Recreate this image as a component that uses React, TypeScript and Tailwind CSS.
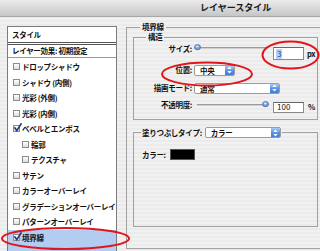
import React from "react";

const FONT = "font-['Noto_Sans_CJK_JP','Noto_Sans_CJK_SC',sans-serif]";
const T = "text-[7.5px] leading-[10px] tracking-[-0.3px] font-semibold";

function Check({ checked }: { checked?: boolean }) {
  return (
    <span className="relative block w-[7px] h-[7px] shrink-0 border border-[#8c8c8c] bg-gradient-to-b from-white to-[#dcdcdc]">
      {checked && (
        <svg className="absolute left-[0px] top-[-3px]" width="8" height="9" viewBox="0 0 8 9">
          <path d="M0.8 4.8 L2.8 7.6 L7.2 0.8" stroke="#1d3a7a" strokeWidth="1.6" fill="none" strokeLinecap="round" />
        </svg>
      )}
    </span>
  );
}

function Arrows() {
  return (
    <svg width="5" height="8" viewBox="0 0 5 8">
      <path d="M2.5 0.5 L4.7 3 L0.3 3 Z" fill="#fff" />
      <path d="M2.5 7.5 L4.7 5 L0.3 5 Z" fill="#fff" />
    </svg>
  );
}

function Select({ text, wide }: { text: string; wide: "w-[41px]" | "w-[86px]" | "w-[76px]" }) {
  return (
    <div className={`flex h-[11px] ${wide} border border-[#9c9c9c] rounded-[2px] bg-white overflow-hidden shrink-0`}>
      <span className={`flex-1 pl-[5px] ${T} leading-[9px] text-[#111]`}>{text}</span>
      <span className="w-[9px] flex items-center justify-center bg-gradient-to-b from-[#a9c9f3] via-[#5d93e0] to-[#3f7bd8]">
        <Arrows />
      </span>
    </div>
  );
}

function Slider({ right }: { right?: boolean }) {
  return (
    <div className="relative w-[74px] h-[8px] shrink-0 flex items-center">
      <div className="ml-[3px] w-[70px] h-[2px] bg-[#9a9a9a] border-b border-[#d0d0d0]" />
      <svg
        className={right ? "absolute left-[68px] top-[0px]" : "absolute left-[0px] top-[0px]"}
        width="7"
        height="7"
        viewBox="0 0 7 7"
      >
        <ellipse cx="3.5" cy="3.2" rx="3" ry="2.6" fill="#6f9ee0" stroke="#4a6fa8" strokeWidth="0.8" />
        <ellipse cx="3.2" cy="2.4" rx="1.6" ry="1" fill="#d8e6f8" />
      </svg>
    </div>
  );
}

const items: { t: string; c?: boolean; sub?: boolean; sel?: boolean; h: string }[] = [
  { t: "ドロップシャドウ", h: "h-[16px]" },
  { t: "シャドウ (内側)", h: "h-[15px]" },
  { t: "光彩 (外側)", h: "h-[16px]" },
  { t: "光彩 (内側)", h: "h-[15px]" },
  { t: "ベベルとエンボス", c: true, h: "h-[16px]" },
  { t: "輪郭", sub: true, h: "h-[15px]" },
  { t: "テクスチャ", sub: true, h: "h-[16px]" },
  { t: "サテン", h: "h-[15px]" },
  { t: "カラーオーバーレイ", h: "h-[16px]" },
  { t: "グラデーションオーバーレイ", h: "h-[15px]" },
  { t: "パターンオーバーレイ", h: "h-[16px]" },
  { t: "境界線", c: true, sel: true, h: "h-[24px]" },
];

export default function App() {
  return (
    <div className={`relative w-[320px] h-[251px] overflow-hidden text-[#111] ${FONT} bg-[repeating-linear-gradient(180deg,#ebebeb_0px,#ebebeb_2px,#f1f1f1_2px,#f1f1f1_4px)]`}>
      {/* title bar */}
      <div className="h-[17px] flex items-center pl-[200px] bg-gradient-to-b from-[#ececec] to-[#c6c6c6] border-b border-[#a8a8a8]">
        <span className="text-[9px] leading-[12px] font-semibold text-[#1a1a1a]">レイヤースタイル</span>
      </div>

      <div className="flex">
        {/* left styles list */}
        <div className="ml-[7px] mt-[9px] w-[110px] h-[240px] shrink-0 border border-[#7c7c7c] bg-white flex flex-col">
          <div className={`h-[18px] border-b-[3px] border-double border-[#555] flex items-center pl-[4px] ${T}`}>
            スタイル
          </div>
          <div className={`h-[13px] border-b border-[#9a9a9a] flex items-center pl-[4px] ${T}`}>
            レイヤー効果: 初期設定
          </div>
          <div className="flex flex-col pt-[1px]">
            {items.map((it) => (
              <div
                key={it.t}
                className={`${it.h} flex items-start ${it.sub ? "pl-[14px]" : "pl-[5px]"} ${it.sel ? "bg-[#b3cdf2]" : ""}`}
              >
                <div className="h-[15px] flex items-center gap-[2px]">
                  <Check checked={it.c} />
                  <span className={`${T} whitespace-nowrap`}>{it.t}</span>
                </div>
              </div>
            ))}
          </div>
        </div>

        {/* right: 境界線 group */}
        <fieldset className="ml-[9px] mt-[5px] w-[196px] h-[227px] shrink-0 min-w-0 border border-r-0 border-[#a2a2a2]">
          <legend className={`ml-[13px] px-[2px] ${T}`}>境界線</legend>

          {/* 構造 */}
          <fieldset className="ml-[6px] w-[185px] h-[88px] min-w-0 border border-[#a2a2a2]">
            <legend className={`ml-[12px] px-[2px] ${T}`}>構造</legend>
            <div className="flex flex-col">
              <div className="h-[18px] flex items-start">
                <span className={`w-[58px] mt-[2px] text-right ${T}`}>サイズ:</span>
                <div className="ml-[2px] mt-[2px]">
                  <Slider />
                </div>
                <div className="ml-[5px] mt-[5px] w-[31px] h-[13px] border border-[#8a8a8a] border-t-[#666] bg-white flex items-center pl-[2px]">
                  <span className="bg-[#b7d2f6] text-[#1b3f8f] text-[8px] leading-[10px] px-[1px]">3</span>
                </div>
                <span className={`ml-[3px] mt-[7px] ${T}`}>px</span>
              </div>
              <div className="mt-[3px] h-[14px] flex items-center">
                <span className={`w-[58px] text-right ${T}`}>位置:</span>
                <div className="ml-[2px]">
                  <Select text="中央" wide="w-[41px]" />
                </div>
              </div>
              <div className="mt-[4px] h-[14px] flex items-center">
                <span className={`w-[58px] text-right ${T}`}>描画モード:</span>
                <div className="ml-[2px]">
                  <Select text="通常" wide="w-[86px]" />
                </div>
              </div>
              <div className="mt-[3px] h-[14px] flex items-center">
                <span className={`w-[58px] text-right ${T}`}>不透明度:</span>
                <div className="ml-[2px]">
                  <Slider right />
                </div>
                <div className="ml-[5px] mt-[4px] w-[31px] h-[11px] border border-[#8a8a8a] border-t-[#666] bg-white flex items-center pl-[3px]">
                  <span className="text-[8px] leading-[10px]">100</span>
                </div>
                <span className={`ml-[4px] mt-[4px] ${T}`}>%</span>
              </div>
            </div>
          </fieldset>

          {/* 塗りつぶしタイプ */}
          <fieldset className="ml-[6px] mt-[7px] w-[185px] h-[100px] min-w-0 border border-[#a2a2a2]">
            <legend className="ml-[7px] px-[1px] flex items-center h-[11px]">
              <span className={T}>塗りつぶしタイプ:</span>
              <div className="ml-[3px]">
                <Select text="カラー" wide="w-[76px]" />
              </div>
            </legend>
            <div className="mt-[11px] h-[11px] flex items-center pl-[8px]">
              <span className={T}>カラー:</span>
              <div className="ml-[4px] w-[25px] h-[11px] bg-black border border-[#555]" />
            </div>
          </fieldset>
        </fieldset>
      </div>

      {/* red annotation ellipses */}
      <svg className="absolute left-0 top-0 pointer-events-none" width="320" height="251" viewBox="0 0 320 251">
        <ellipse cx="65.5" cy="238.5" rx="63.5" ry="10.5" fill="none" stroke="#e1161c" strokeWidth="2" />
        <ellipse cx="207" cy="74" rx="45" ry="11.5" fill="none" stroke="#e1161c" strokeWidth="2" />
        <ellipse cx="290.5" cy="55" rx="28" ry="13.5" fill="none" stroke="#e1161c" strokeWidth="2" />
      </svg>
    </div>
  );
}
